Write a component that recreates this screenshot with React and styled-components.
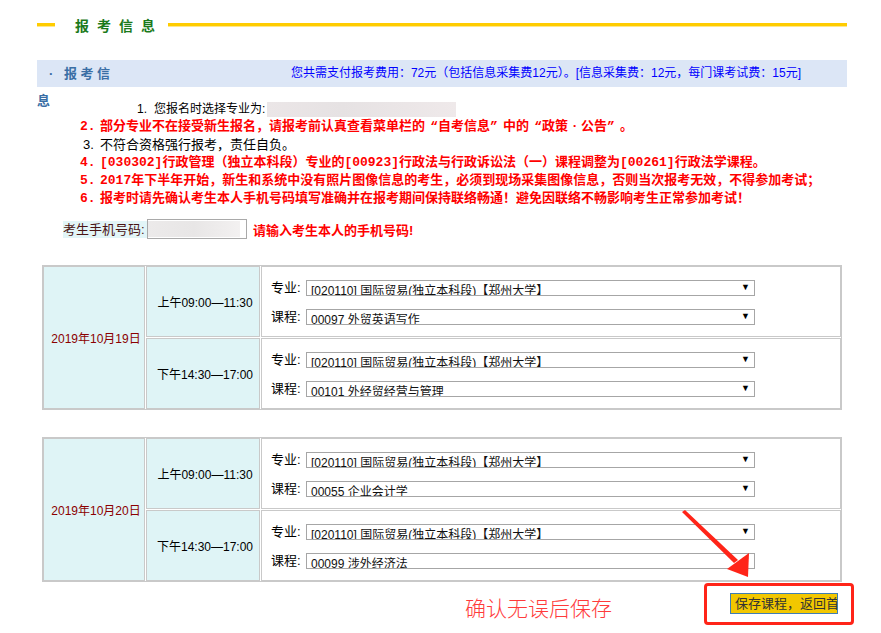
import React from "react";
import styled, { createGlobalStyle } from "styled-components";

const Global = createGlobalStyle`
  html, body { margin: 0; padding: 0; background: #fff; }
  body {
    font-family: "Liberation Sans", "Noto Sans CJK SC", sans-serif;
    font-size: 12px;
    color: #000;
  }
  * { box-sizing: border-box; }
`;

const Page = styled.div`
  position: relative;
  width: 881px;
  height: 633px;
  overflow: hidden;
`;

const Header = styled.div`
  display: flex;
  align-items: center;
  height: 49px;
  padding: 0 34px 0 37px;
`;

const Rule = styled.div`
  height: 4px;
  border-top: 3px solid #ffcc00;
  border-bottom: 1px solid #ffe88a;
  flex: ${(p) => (p.$grow ? "1 1 auto" : "0 0 auto")};
  width: ${(p) => (p.$w ? `${p.$w}px` : "auto")};
`;

const Title = styled.div`
  margin: 0 13px 0 20px;
  width: 80px;
  font-size: 14px;
  font-weight: bold;
  letter-spacing: 8px;
  white-space: nowrap;
  color: #1b7a1b;
`;

const Bar = styled.div`
  display: flex;
  align-items: flex-start;
  height: 27px;
  margin: 11px 34px 0 37px;
  background: #dce6f6;
`;

const BarTitle = styled.div`
  flex: 0 0 78px;
  width: 78px;
  line-height: 27px;
  text-indent: 12px;
  font-size: 13px;
  font-weight: bold;
  letter-spacing: 3.5px;
  color: #3a6ea5;
`;

const Fee = styled.div`
  margin-left: auto;
  padding-right: 46px;
  line-height: 27px;
  font-size: 12px;
  color: #0000ff;
  white-space: nowrap;
`;

const Notices = styled.div`
  margin-top: 13px;
`;

const Line = styled.div`
  height: 18px;
  line-height: 18px;
  padding-left: ${(p) => p.$indent}px;
  white-space: nowrap;
  font-size: ${(p) => (p.$small ? 12 : 13)}px;
  font-weight: ${(p) => (p.$red ? "bold" : "normal")};
  font-family: ${(p) =>
    p.$red
      ? `"Liberation Mono", "Noto Sans CJK SC", monospace`
      : `"Liberation Sans", "Noto Sans CJK SC", sans-serif`};
  color: ${(p) => (p.$red ? "#ff0000" : "#000")};
  display: flex;
  align-items: center;
`;

const Num = styled.span`
  display: inline-block;
  width: ${(p) => p.$w}px;
  flex: none;
`;

const Wide = styled.span`
  display: inline-block;
  width: 13px;
  text-align: ${(p) => p.$align || "center"};
`;

const Blur = styled.span`
  display: inline-block;
  width: 189px;
  height: 15px;
  margin-left: 2px;
  background: linear-gradient(90deg, #ebe6e7 0%, #e6e2e3 40%, #efe9ea 100%);
  filter: blur(0.5px);
`;

const PhoneRow = styled.div`
  display: flex;
  align-items: center;
  height: 20px;
  margin-top: 11px;
  padding-left: 63px;
`;

const PhoneLabel = styled.span`
  display: inline-block;
  width: 84px;
  height: 17px;
  line-height: 17px;
  background: #e2f5f7;
  color: #4a1414;
  font-size: 13px;
  white-space: nowrap;
`;

const PhoneInput = styled.div`
  width: 100px;
  height: 20px;
  border: 1px solid #a9a9a9;
  background: #fff;
  padding: 1px 6px 1px 0;
`;

const PhoneBlur = styled.div`
  height: 100%;
  background: linear-gradient(90deg, #eceaea 0%, #e8e6e6 50%, #f3f1f1 100%);
`;

const PhoneHint = styled.span`
  margin-left: 6px;
  font-size: 13px;
  font-weight: bold;
  color: #ff0000;
  white-space: nowrap;
`;

const ExamGrid = styled.div`
  display: grid;
  grid-template-columns: 102px 114px 1fr;
  grid-template-rows: 71px 71px;
  gap: 1px;
  width: 800px;
  margin: ${(p) => p.$top}px 0 0 42px;
  border: 1px solid #c9c9c9;
  background: #fff;
`;

const DateCell = styled.div`
  grid-row: 1 / span 2;
  display: flex;
  align-items: center;
  justify-content: center;
  padding-left: 4px;
  border: 1px solid #c9c9c9;
  background: #dff4f6;
  color: #8b0000;
  font-size: 12px;
  white-space: nowrap;
`;

const TimeCell = styled.div`
  display: flex;
  align-items: center;
  justify-content: center;
  padding-left: 4px;
  border: 1px solid #c9c9c9;
  background: #dff4f6;
  font-size: 12px;
  white-space: nowrap;
`;

const ChoiceCell = styled.div`
  display: flex;
  flex-direction: column;
  gap: 13px;
  padding: 13px 0 0 9px;
  border: 1px solid #c9c9c9;
  background: #fff;
`;

const ChoiceRow = styled.div`
  display: flex;
  align-items: center;
  height: 16px;
`;

const ChoiceLabel = styled.span`
  width: 35px;
  flex: none;
  font-size: 13px;
  white-space: nowrap;
  margin-top: -4px;
`;

const Select = styled.div`
  display: flex;
  align-items: flex-start;
  width: 449px;
  height: 16px;
  overflow: hidden;
  border: 1px solid #a6a6a6;
  background: #fff;
`;

const SelectText = styled.span`
  flex: 1;
  padding: 3px 0 0 4px;
  line-height: 15px;
  font-size: 12px;
  white-space: nowrap;
  color: #111;
`;

const SelectArrow = styled.span`
  flex: none;
  padding: 0 4px 0 0;
  line-height: 12px;
  font-size: 9px;
  color: #000;
`;

const Footer = styled.div`
  display: flex;
  align-items: center;
  height: 42px;
  margin-top: 1px;
`;

const Caption = styled.div`
  margin: 6px 0 0 465px;
  font-size: 21px;
  color: #ff3b3b;
  white-space: nowrap;
  font-family: "Noto Sans CJK SC", sans-serif;
  font-weight: 300;
`;

const Highlight = styled.div`
  width: 150px;
  height: 42px;
  margin-left: 92px;
  padding: 7px 0 0 23px;
  border: 3px solid #ff2418;
  border-radius: 4px;
`;

const SaveButton = styled.div`
  width: 108px;
  height: 21px;
  line-height: 19px;
  overflow: hidden;
  padding-left: 4px;
  white-space: nowrap;
  border: 1px solid #3f7db3;
  background: #f2c700;
  color: #333;
  font-size: 13px;
`;

const ArrowSvg = styled.svg`
  position: absolute;
  left: 0;
  top: 0;
  pointer-events: none;
`;

const MAJOR = "[020110] 国际贸易(独立本科段)【郑州大学】";

function Choice({ label, value }) {
  return (
    <ChoiceRow>
      <ChoiceLabel>{label}</ChoiceLabel>
      <Select>
        <SelectText>{value}</SelectText>
        <SelectArrow>▼</SelectArrow>
      </Select>
    </ChoiceRow>
  );
}

function ExamDay({ date, slots, top }) {
  return (
    <ExamGrid $top={top}>
      <DateCell>{date}</DateCell>
      {slots.map((s, i) => (
        <React.Fragment key={i}>
          <TimeCell>{s.time}</TimeCell>
          <ChoiceCell>
            <Choice label="专业:" value={MAJOR} />
            <Choice label="课程:" value={s.course} />
          </ChoiceCell>
        </React.Fragment>
      ))}
    </ExamGrid>
  );
}

export default function App() {
  return (
    <Page>
      <Global />
      <Header>
        <Rule $w={18} />
        <Title>报考信息</Title>
        <Rule $grow />
      </Header>
      <Bar>
        <BarTitle>· 报考信息</BarTitle>
        <Fee>
          您共需支付报考费用：72元（包括信息采集费12元）。[信息采集费：12元，每门课考试费：15元]
        </Fee>
      </Bar>
      <Notices>
        <Line $indent={137} $small>
          <Num $w={17}>1.</Num>您报名时选择专业为:<Blur />
        </Line>
        <Line $indent={80} $red>
          <Num $w={20}>2.</Num>部分专业不在接受新生报名，请报考前认真查看菜单栏的
          <Wide $align="right">“</Wide>自考信息<Wide $align="left">”</Wide>中的
          <Wide $align="right">“</Wide>政策<Wide>·</Wide>公告<Wide $align="left">”</Wide>。
        </Line>
        <Line $indent={83}>
          <Num $w={17}>3.</Num>不符合资格强行报考，责任自负。
        </Line>
        <Line $indent={80} $red>
          <Num $w={20}>4.</Num>[030302]行政管理（独立本科段）专业的[00923]行政法与行政诉讼法（一）课程调整为[00261]行政法学课程。
        </Line>
        <Line $indent={80} $red>
          <Num $w={20}>5.</Num>2017年下半年开始，新生和系统中没有照片图像信息的考生，必须到现场采集图像信息，否则当次报考无效，不得参加考试；
        </Line>
        <Line $indent={80} $red>
          <Num $w={20}>6.</Num>报考时请先确认考生本人手机号码填写准确并在报考期间保持联络畅通！避免因联络不畅影响考生正常参加考试！
        </Line>
      </Notices>
      <PhoneRow>
        <PhoneLabel>考生手机号码:</PhoneLabel>
        <PhoneInput>
          <PhoneBlur />
        </PhoneInput>
        <PhoneHint>请输入考生本人的手机号码!</PhoneHint>
      </PhoneRow>
      <ExamDay
        top={26}
        date="2019年10月19日"
        slots={[
          { time: "上午09:00—11:30", course: "00097 外贸英语写作" },
          { time: "下午14:30—17:00", course: "00101 外经贸经营与管理" },
        ]}
      />
      <ExamDay
        top={27}
        date="2019年10月20日"
        slots={[
          { time: "上午09:00—11:30", course: "00055 企业会计学" },
          { time: "下午14:30—17:00", course: "00099 涉外经济法" },
        ]}
      />
      <Footer>
        <Caption>确认无误后保存</Caption>
        <Highlight>
          <SaveButton>保存课程，返回首页</SaveButton>
        </Highlight>
      </Footer>
      <ArrowSvg width="881" height="633" viewBox="0 0 881 633">
        <polygon points="682,512 685,510 738,560 734,563" fill="#ff2418" />
        <polygon points="727,569 749,553 748,577" fill="#ff2418" />
      </ArrowSvg>
    </Page>
  );
}
